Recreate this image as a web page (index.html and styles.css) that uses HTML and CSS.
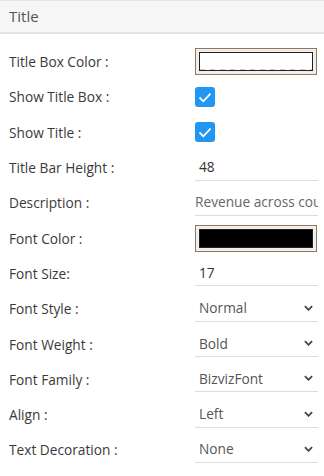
FILE: index.html
```html
<!DOCTYPE html>
<html lang="en">
<head>
    <meta charset="UTF-8" />
    <meta name="viewport" content="width=device-width, initial-scale=1" />
    <title>Title Properties</title>
    <link rel="stylesheet" href="styles.css">
</head>
<body>
    <div class="panel">
        <div class="panel-head">Title</div>
        <div class="props">
            <div class="row">
                <label>Title Box Color :</label>
                <div class="value">
                    <div class="color-box"><div class="swatch swatch-empty"></div></div>
                </div>
            </div>
            <div class="row">
                <label>Show Title Box :</label>
                <div class="value"><span class="check"><svg viewBox="0 0 20 20"><path d="M4.5 10.5l3.8 3.8 7.2-7.6" /></svg></span></div>
            </div>
            <div class="row">
                <label>Show Title :</label>
                <div class="value"><span class="check"><svg viewBox="0 0 20 20"><path d="M4.5 10.5l3.8 3.8 7.2-7.6" /></svg></span></div>
            </div>
            <div class="row">
                <label>Title Bar Height :</label>
                <div class="value"><div class="field num">48</div></div>
            </div>
            <div class="row">
                <label>Description :</label>
                <div class="value"><div class="field text">Revenue across countries</div></div>
            </div>
            <div class="row">
                <label>Font Color :</label>
                <div class="value">
                    <div class="color-box"><div class="swatch" style="background:#000000"></div></div>
                </div>
            </div>
            <div class="row">
                <label>Font Size:</label>
                <div class="value"><div class="field num">17</div></div>
            </div>
            <div class="row">
                <label>Font Style :</label>
                <div class="value"><div class="field select">Normal<svg class="chev" viewBox="0 0 10 6"><path d="M1 1l4 4 4-4" /></svg></div></div>
            </div>
            <div class="row">
                <label>Font Weight :</label>
                <div class="value"><div class="field select">Bold<svg class="chev" viewBox="0 0 10 6"><path d="M1 1l4 4 4-4" /></svg></div></div>
            </div>
            <div class="row">
                <label>Font Family :</label>
                <div class="value"><div class="field select">BizvizFont<svg class="chev" viewBox="0 0 10 6"><path d="M1 1l4 4 4-4" /></svg></div></div>
            </div>
            <div class="row">
                <label>Align :</label>
                <div class="value"><div class="field select">Left<svg class="chev" viewBox="0 0 10 6"><path d="M1 1l4 4 4-4" /></svg></div></div>
            </div>
            <div class="row">
                <label>Text Decoration :</label>
                <div class="value"><div class="field select">None<svg class="chev" viewBox="0 0 10 6"><path d="M1 1l4 4 4-4" /></svg></div></div>
            </div>
        </div>
    </div>
</body>
</html>
```

FILE: styles.css
```css
body {
    margin: 0;
    font-family: "Open Sans", "Liberation Sans", sans-serif;
    font-size: 13.7px;
    color: #333;
    background: #fff;
}
.panel {
    width: 324px;
    border-top: 1px solid #dde8f1;
}
.panel-head {
    height: 31px;
    line-height: 30px;
    padding-left: 9px;
    background: #f6f6f6;
    border-bottom: 2px solid #e2e2e2;
    font-size: 15px;
    color: #555;
}
.props {
    padding: 10px 6px 0 9px;
}
.row {
    display: flex;
    align-items: center;
    height: 35.3px;
}
.row label {
    width: 186px;
    color: #3a3a3a;
}
.value {
    flex: 1;
    display: flex;
    align-items: center;
}
.color-box {
    width: 122px;
    height: 27px;
    box-sizing: border-box;
    border: 1px solid #94765a;
    background: #efefef;
    padding: 3px 3px;
    display: flex;
}
.swatch {
    flex: 1;
    border: 1px solid #222;
    background: #fff;
}
.swatch-empty {
    background: #fff linear-gradient(to right, #c8c8c8 50%, transparent 50%) bottom left / 10px 1px repeat-x;
}
.check {
    width: 20px;
    height: 20px;
    border-radius: 3px;
    background: #2196f3;
    display: flex;
}
.check svg {
    width: 20px;
    height: 20px;
    fill: none;
    stroke: #fff;
    stroke-width: 1.8;
}
.field {
    width: 123px;
    height: 27px;
    box-sizing: border-box;
    border-bottom: 1px solid #ddd;
    display: flex;
    align-items: center;
    margin-top: -1px;
    white-space: nowrap;
    overflow: hidden;
}
.field.num {
    padding-left: 4px;
    color: #333;
}
.field.text {
    color: #666;
}
.field.select {
    padding-left: 4px;
    padding-right: 5px;
    color: #555;
    justify-content: space-between;
}
.chev {
    width: 9px;
    height: 6px;
    fill: none;
    stroke: #444;
    stroke-width: 2;
}
```
